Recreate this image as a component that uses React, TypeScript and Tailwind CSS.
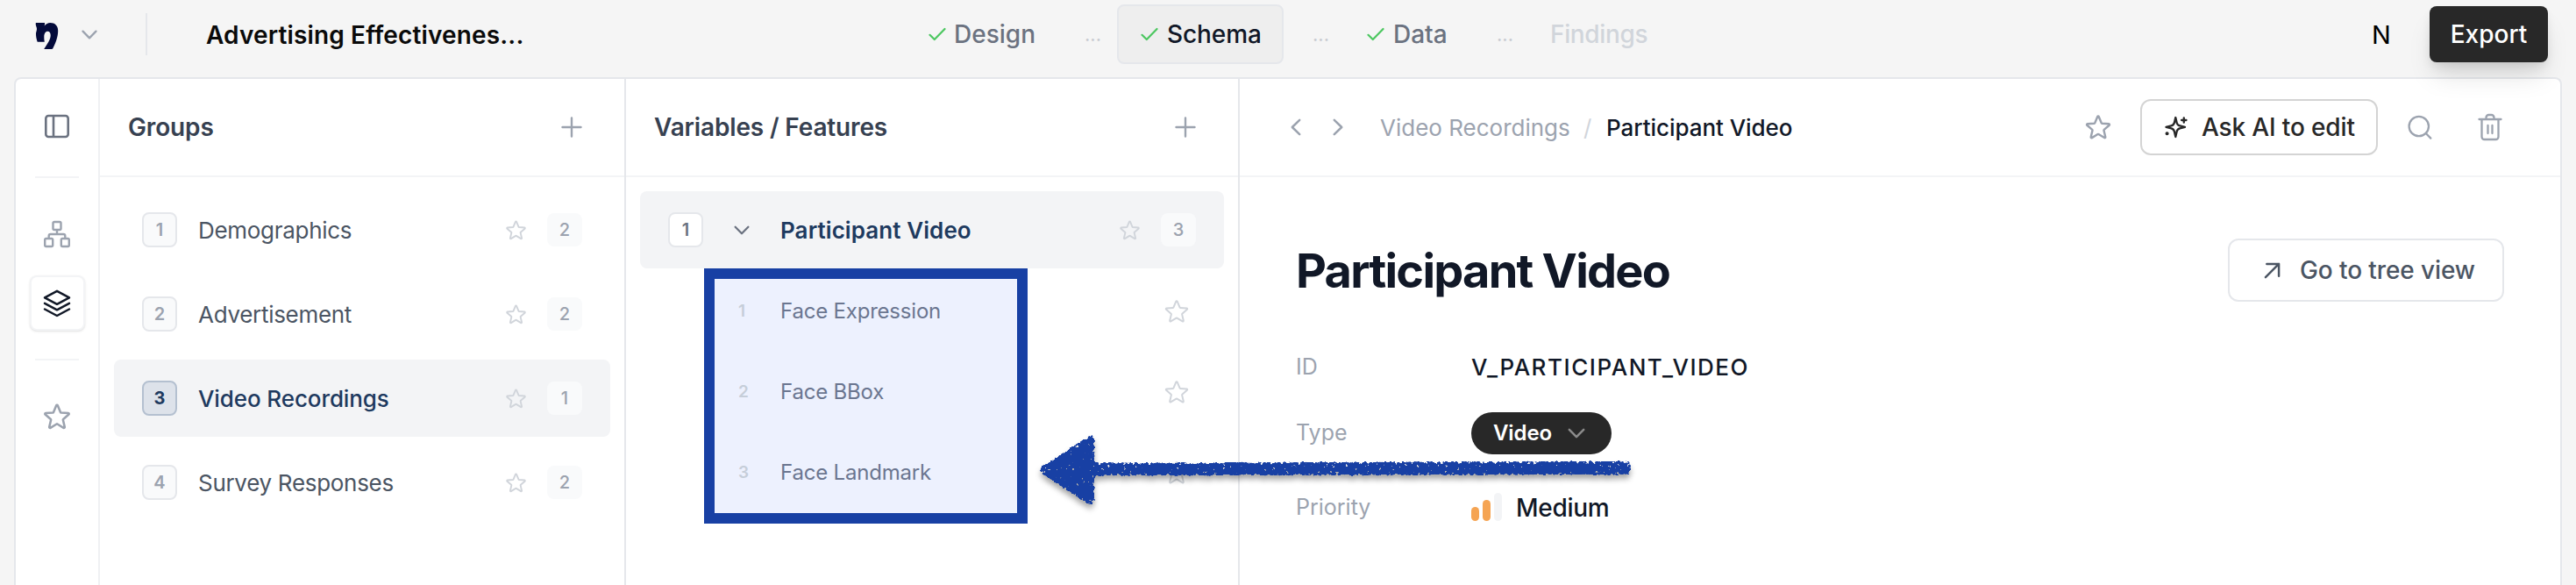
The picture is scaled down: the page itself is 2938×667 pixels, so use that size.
import type { ReactNode } from "react";

function Chevron({ className, color, sw = 2.5 }: { className: string; color: string; sw?: number }) {
  return (
    <svg className={className} viewBox="0 0 20 12" fill="none" stroke={color} strokeWidth={sw} strokeLinecap="round" strokeLinejoin="round">
      <path d="M1.8 1.8 10 10.2 18.2 1.8" />
    </svg>
  );
}

function Star({ className, sw = 1.5 }: { className: string; sw?: number }) {
  return (
    <svg className={className} viewBox="0 0 24 24" fill="none" stroke="currentColor" strokeWidth={sw} strokeLinecap="round" strokeLinejoin="round">
      <path d="M11.48 3.499a.562.562 0 0 1 1.04 0l2.125 5.111a.563.563 0 0 0 .475.345l5.518.442c.499.04.701.663.321.988l-4.204 3.602a.563.563 0 0 0-.182.557l1.285 5.385a.562.562 0 0 1-.84.61l-4.725-2.885a.562.562 0 0 0-.586 0L6.982 20.54a.562.562 0 0 1-.84-.61l1.285-5.386a.562.562 0 0 0-.182-.557l-4.204-3.602a.562.562 0 0 1 .321-.988l5.518-.442a.563.563 0 0 0 .475-.345L11.48 3.5Z" />
    </svg>
  );
}

function Plus() {
  return (
    <svg className="size-6" viewBox="0 0 24 24" fill="none" stroke="#9ca3af" strokeWidth={2.4} strokeLinecap="round">
      <path d="M12 1.5v21M1.5 12h21" />
    </svg>
  );
}

function Check() {
  return (
    <svg className="h-4 w-5 shrink-0" viewBox="0 0 20 16" fill="none" stroke="#4cc760" strokeWidth={2.2} strokeLinecap="round" strokeLinejoin="round">
      <path d="M1.5 8.8 6.8 14 18.5 2" />
    </svg>
  );
}

function Header() {
  return (
    <header className="flex h-[88px] shrink-0 items-start">
      <div className="flex h-[78px] w-[1059px] items-center pl-[39px]">
        <svg className="h-[32px] w-[29px] translate-y-[2px]" viewBox="0 0 29 32">
          <path
            fill="#030a3a"
            d="M2.500 1H11c1 0 1.300.4 1.100 1.300L11.700 4.600C13.500 2.200 15.500 1 18.300 1c5.400 0 8.900 3.400 8.900 9 0 7.200-3.100 14.800-5.700 19.700-.5 1-1 1.300-1.900 1.300h-8.400l1.100-1.800c2.900-4.400 6.400-9.600 6.400-14 0-2.700-1.200-4.500-3.300-4.500-2.600 0-4.100 2.600-4.100 6.100 0 2.300.1 4 .5 5.900H4.600c-.7 0-1-.2-1.200-.8C2.500 19.200 2 16.200 2 13.200c0-1.700 1-3.300 1-5.200 0-2-1.300-3.800-1.300-5.800 0-.9.200-1.200.8-1.200Z"
          />
        </svg>
        <Chevron className="ml-[24px] h-[11px] w-[20px]" color="#9ca3af" />
        <div className="ml-[54px] h-12 w-[2px] bg-[#e5e7eb]" />
        <span className="ml-[67px] translate-y-[1px] text-[28px] font-semibold tracking-[0.14px] whitespace-nowrap text-[#0a0a0a]">Advertising Effectivenes...</span>
      </div>
      <nav className="flex h-[78px] w-[1646px] items-center text-[28px] font-medium whitespace-nowrap text-[#6b7280]">
        <Check />
        <span className="ml-[9px] w-[149px]">Design</span>
        <span className="w-[37px] text-[22px] font-normal text-[#c9ccd2]">...</span>
        <div className="flex h-[68px] w-[190px] items-center gap-[10px] rounded-lg border-2 border-[#e5e7eb] bg-[#eeeeee] pl-[25px] text-[#111827]">
          <Check />
          <span className="tracking-[-0.1px]">Schema</span>
        </div>
        <span className="ml-[33px] w-[62px] text-[22px] font-normal text-[#c9ccd2]">...</span>
        <Check />
        <span className="ml-[10px] w-[118px]">Data</span>
        <span className="w-[61px] text-[22px] font-normal text-[#c9ccd2]">...</span>
        <span className="tracking-[-0.35px] text-[#d1d5db]">Findings</span>
      </nav>
      <span className="flex h-[80px] w-[66px] items-center text-[29px] text-black">N</span>
      <button className="relative mt-[7px] h-16 w-[135px] rounded-lg bg-[#282828] text-[28px] font-medium text-white shadow-[0_20px_30px_-6px_rgba(0,0,0,0.13),0_6px_12px_-2px_rgba(0,0,0,0.10)]">Export</button>
    </header>
  );
}

function Rail() {
  return (
    <aside className="flex w-[96px] shrink-0 flex-col items-center border-r-2 border-[#f0f1f3]">
      <svg className="mt-[38px] h-[32px] w-[32px] text-[#6b7280]" viewBox="0 0 32 32" fill="none" stroke="currentColor" strokeWidth={2.6}>
        <rect x="3.300" y="4" width="25.400" height="24" rx="3" />
        <path d="M12 4v24" />
      </svg>
      <div className="mt-[41px] h-[2px] w-[50px] bg-[#f3f4f6]" />
      <svg className="mt-[48px] h-[32px] w-[32px] text-[#9ca3af]" viewBox="0 0 32 32" fill="none" stroke="currentColor" strokeWidth={2.4} strokeLinejoin="round">
        <rect x="11.500" y="2" width="9" height="9" rx="1.500" />
        <rect x="2.200" y="21" width="9" height="9" rx="1.500" />
        <rect x="20.800" y="21" width="9" height="9" rx="1.500" />
        <path d="M16 11v5M6.700 21v-3a2 2 0 0 1 2-2h14.600a2 2 0 0 1 2 2v3" />
      </svg>
      <div className="mt-[31px] flex h-[63px] w-[63px] items-center justify-center rounded-lg border-2 border-[#f3f4f6] bg-white shadow-sm">
        <svg className="size-8" viewBox="0 0 32 32" fill="none" stroke="#111827" strokeWidth={2.5} strokeLinecap="round" strokeLinejoin="round">
          <path d="M16 1.800 30 9.300 16 16.800 2 9.300ZM2 15.800l14 7.500 14-7.500M2 22.500 16 30l14-7.500" />
        </svg>
      </div>
      <div className="mt-[32px] h-[2px] w-[50px] bg-[#f3f4f6]" />
      <Star className="mt-[46px] size-9 text-[#9ca3af]" sw={1.7} />
    </aside>
  );
}

const groups = [
  { n: 1, name: "Demographics", count: 2 },
  { n: 2, name: "Advertisement", count: 2 },
  { n: 3, name: "Video Recordings", count: 1, active: true },
  { n: 4, name: "Survey Responses", count: 2 },
];

function PanelHeader({ children }: { children: ReactNode }) {
  return <div className="flex h-[112px] shrink-0 items-center justify-between border-b-2 border-[#f3f4f6] pr-[48px] pl-[32px] text-[28px] font-semibold tracking-[-0.15px] text-[#374151]">{children}</div>;
}

function Groups() {
  return (
    <section className="flex w-[600px] shrink-0 flex-col border-r-2 border-[#e5e7eb]">
      <PanelHeader>
        <span>Groups</span>
        <Plus />
      </PanelHeader>
      <div className="flex flex-col gap-2 py-4 pr-4 pl-4">
        {groups.map((g) => (
          <div key={g.n} className={g.active ? "flex h-[88px] items-center rounded-lg bg-[#f3f4f6] pr-8 pl-8" : "flex h-[88px] items-center pr-8 pl-8"}>
            <span className={g.active ? "flex size-10 items-center justify-center rounded-lg border-2 border-[#b4c0d0] bg-[#dde2ea] text-[20px] font-bold text-[#1e3a5f]" : "flex size-10 items-center justify-center rounded-lg border-2 border-[#e5e7eb] bg-[#f9fafb] text-[20px] font-semibold text-[#9ca3af]"}>{g.n}</span>
            <span className={g.active ? "ml-[24px] flex-1 text-[26px] font-medium tracking-[-0.1px] text-[#1e3a5f]" : "ml-[24px] flex-1 text-[26px] tracking-[-0.3px] text-[#4b5563]"}>{g.name}</span>
            <Star className="size-[27px] text-[#d1d5db]" sw={1.7} />
            <span className="ml-[22px] flex h-[38px] w-10 items-center justify-center rounded-lg bg-[#f9fafb] text-[20px] font-medium text-[#9ca3af]">{g.count}</span>
          </div>
        ))}
      </div>
    </section>
  );
}

function Variables() {
  return (
    <section className="flex w-[700px] shrink-0 flex-col border-r-2 border-[#e5e7eb]">
      <PanelHeader>
        <span>Variables / Features</span>
        <Plus />
      </PanelHeader>
      <div className="py-4 pr-4 pl-4">
        <div className="flex h-[88px] items-center rounded-lg bg-[#f3f4f6] px-8">
          <span className="flex size-10 items-center justify-center rounded-lg border-2 border-[#e5e7eb] bg-white text-[20px] font-semibold text-[#6b7280]">1</span>
          <Chevron className="ml-[35px] h-[11px] w-[18px]" color="#6b7280" />
          <span className="ml-[35px] flex-1 text-[26px] font-semibold tracking-[0.08px] text-[#1e3a5f]">Participant Video</span>
          <Star className="size-[27px] text-[#d1d5db]" sw={1.7} />
          <span className="ml-[22px] flex h-[38px] w-10 items-center justify-center rounded-lg bg-[#f9fafb] text-[20px] font-medium text-[#9ca3af]">3</span>
        </div>
        <div className="relative pt-[5px]">
          <div className="absolute top-0 left-[73px] h-[291px] w-[369px] border-[12px] border-[#1840a4] bg-[#edf1fe]" />
          {["Face Expression", "Face BBox", "Face Landmark"].map((f, i) => (
            <div key={f} className="relative flex h-[92px] items-center pr-[38px] pb-[4px] pl-[112px]">
              <span className="w-[48px] text-[19px] font-semibold text-[#c6ced9]">{i + 1}</span>
              <span className="flex-1 text-[24px] tracking-[-0.2px] text-[#6b7690]">{f}</span>
              <Star className="size-[32px] text-[#d1d5db]" />
            </div>
          ))}
        </div>
      </div>
    </section>
  );
}

function Detail() {
  return (
    <section className="flex min-w-0 flex-1 flex-col">
      <div className="flex h-[112px] shrink-0 items-center border-b-2 border-[#f3f4f6] pl-[54px] text-[26px] whitespace-nowrap">
        <Chevron className="h-[12px] w-[20px] rotate-90" color="#9ca3af" />
        <Chevron className="ml-[28px] h-[12px] w-[20px] -rotate-90" color="#9ca3af" />
        <span className="ml-[38px] w-[232px] text-[#9ca3af]">Video Recordings</span>
        <span className="w-[26px] text-[#d1d5db]">/</span>
        <span className="flex-1 font-medium tracking-[-0.05px] text-[#111827]">Participant Video</span>
        <Star className="size-[34px] text-[#9ca3af]" sw={1.7} />
        <button className="ml-[31px] flex h-16 w-[271px] items-center rounded-xl border-2 border-[#d4d4d4] pl-[24px] text-[28px] font-medium tracking-[-0.15px] text-[#282828]">
          <svg className="size-[30px]" viewBox="0 0 30 30" fill="none" stroke="#282828" strokeWidth={2.3} strokeLinejoin="round" strokeLinecap="round">
            <path d="M14.300 4 15.700 9.900Q16.400 12.700 19.200 13.400L25 14.900 19.200 16.400Q16.400 17.100 15.700 19.900L14.300 26 12.900 19.900Q12.200 17.100 9.400 16.400L3.500 14.900 9.400 13.400Q12.200 12.700 12.900 9.900Z" />
            <path d="M23.800 4.300v5.400M21.100 7h5.400" />
            <circle cx="4.600" cy="22.200" r=".9" fill="#282828" />
          </svg>
          <span className="ml-[14px]">Ask AI to edit</span>
        </button>
        <svg className="ml-[34px] size-[30px]" viewBox="0 0 30 30" fill="none" stroke="#9ca3af" strokeWidth={2.3} strokeLinecap="round">
          <circle cx="12.800" cy="14" r="11.200" />
          <path d="m21 22.300 5.300 5.300" />
        </svg>
        <svg className="mr-[65px] ml-[49px] h-[32px] w-[30px]" viewBox="0 0 30 32" fill="none" stroke="#9ca3af" strokeWidth={2.3} strokeLinecap="round" strokeLinejoin="round">
          <path d="M2.500 7h25M5.500 7v20a3 3 0 0 0 3 3h13a3 3 0 0 0 3-3V7M10.500 7V5a3 3 0 0 1 3-3h3a3 3 0 0 1 3 3v2M12.500 14v9M17.500 14v9" />
        </svg>
      </div>
      <div className="pt-[69px] pr-[64px] pl-[64px]">
        <div className="flex h-[74px] items-center justify-between">
          <h1 className="text-[54px] font-bold tracking-[-1.75px] text-[#111827]">Participant Video</h1>
          <button className="flex h-[72px] w-[315px] items-center rounded-xl border-2 border-[#e5e7eb] pl-[39px] text-[28px] font-medium tracking-[-0.1px] text-[#4b5563]">
            <svg className="size-[19px]" viewBox="0 0 20 20" fill="none" stroke="#4b5563" strokeWidth={2.6} strokeLinecap="round" strokeLinejoin="round">
              <path d="M2 18 18 2M3.500 2H18v14.500" />
            </svg>
            <span className="ml-[22px]">Go to tree view</span>
          </button>
        </div>
        <dl className="mt-[37px] grid grid-cols-[200px_1fr] text-[25px] text-[#9ca3af]">
          <dt className="flex h-[74px] items-center">ID</dt>
          <dd className="flex h-[74px] items-center pb-[2px] text-[26px] font-[450] tracking-[1.55px] text-[#111827]">V_PARTICIPANT_VIDEO</dd>
          <dt className="flex h-[76px] items-center">Type</dt>
          <dd className="flex h-[76px] items-center">
            <span className="flex h-12 w-[160px] items-center justify-between rounded-full bg-[#282828] pr-[30px] pl-[25px] text-[24px] font-semibold text-white">
              <span className="tracking-[-0.1px]">Video</span>
              <Chevron className="h-3 w-5" color="#8b8b8b" />
            </span>
          </dd>
          <dt className="flex h-[94px] items-center">Priority</dt>
          <dd className="flex h-[94px] items-center text-[28px] font-medium text-[#111827]">
            <span className="mb-[3px] flex h-8 items-end gap-1">
              <i className="h-4 w-[9px] rounded-full bg-[#f5a453]" />
              <i className="h-6 w-[9px] rounded-full bg-[#f5a453]" />
              <i className="h-8 w-[9px] rounded-full bg-[#f3f4f6]" />
            </span>
            <span className="ml-[16px] tracking-[-0.3px]">Medium</span>
          </dd>
        </dl>
      </div>
    </section>
  );
}

function BrushArrow() {
  return (
    <svg className="pointer-events-none absolute top-[480px] left-[1170px] h-[120px] w-[710px]" viewBox="0 0 710 120">
      <defs>
        <filter id="chalk" x="0" y="0" width="710" height="120" filterUnits="userSpaceOnUse" colorInterpolationFilters="sRGB">
          <feGaussianBlur in="SourceAlpha" stdDeviation="2" result="soft" />
          <feTurbulence type="fractalNoise" baseFrequency="0.28" numOctaves="2" seed="7" result="noise" />
          <feColorMatrix in="noise" type="matrix" values="0 0 0 0 0  0 0 0 0 0  0 0 0 0 0  1 0 0 0 0" result="grain" />
          <feComposite in="soft" in2="grain" operator="arithmetic" k1="22" k2="0" k3="0" k4="-5" result="rough" />
          <feFlood floodColor="#1840a4" />
          <feComposite in2="rough" operator="in" result="ink" />
          <feDropShadow in="ink" dx="0" dy="5" stdDeviation="3" floodColor="#000000" floodOpacity="0.35" />
        </filter>
      </defs>
      <g filter="url(#chalk)">
        <path d="M16 56Q16 53 20 51L73 17Q78 14 78 21V48L689 46V61L78 62V90Q78 97 71 94L20 61Q16 59 16 56Z" />
      </g>
    </svg>
  );
}

export default function App() {
  return (
    <div className="relative flex h-[667px] w-[2938px] flex-col overflow-hidden bg-[#f5f5f5] font-['Inter',sans-serif]">
      <Header />
      <main className="ml-[16px] flex w-[2906px] flex-1 overflow-hidden rounded-t-lg border-2 border-b-0 border-[#e5e7eb] bg-white">
        <Rail />
        <Groups />
        <Variables />
        <Detail />
      </main>
      <BrushArrow />
    </div>
  );
}
